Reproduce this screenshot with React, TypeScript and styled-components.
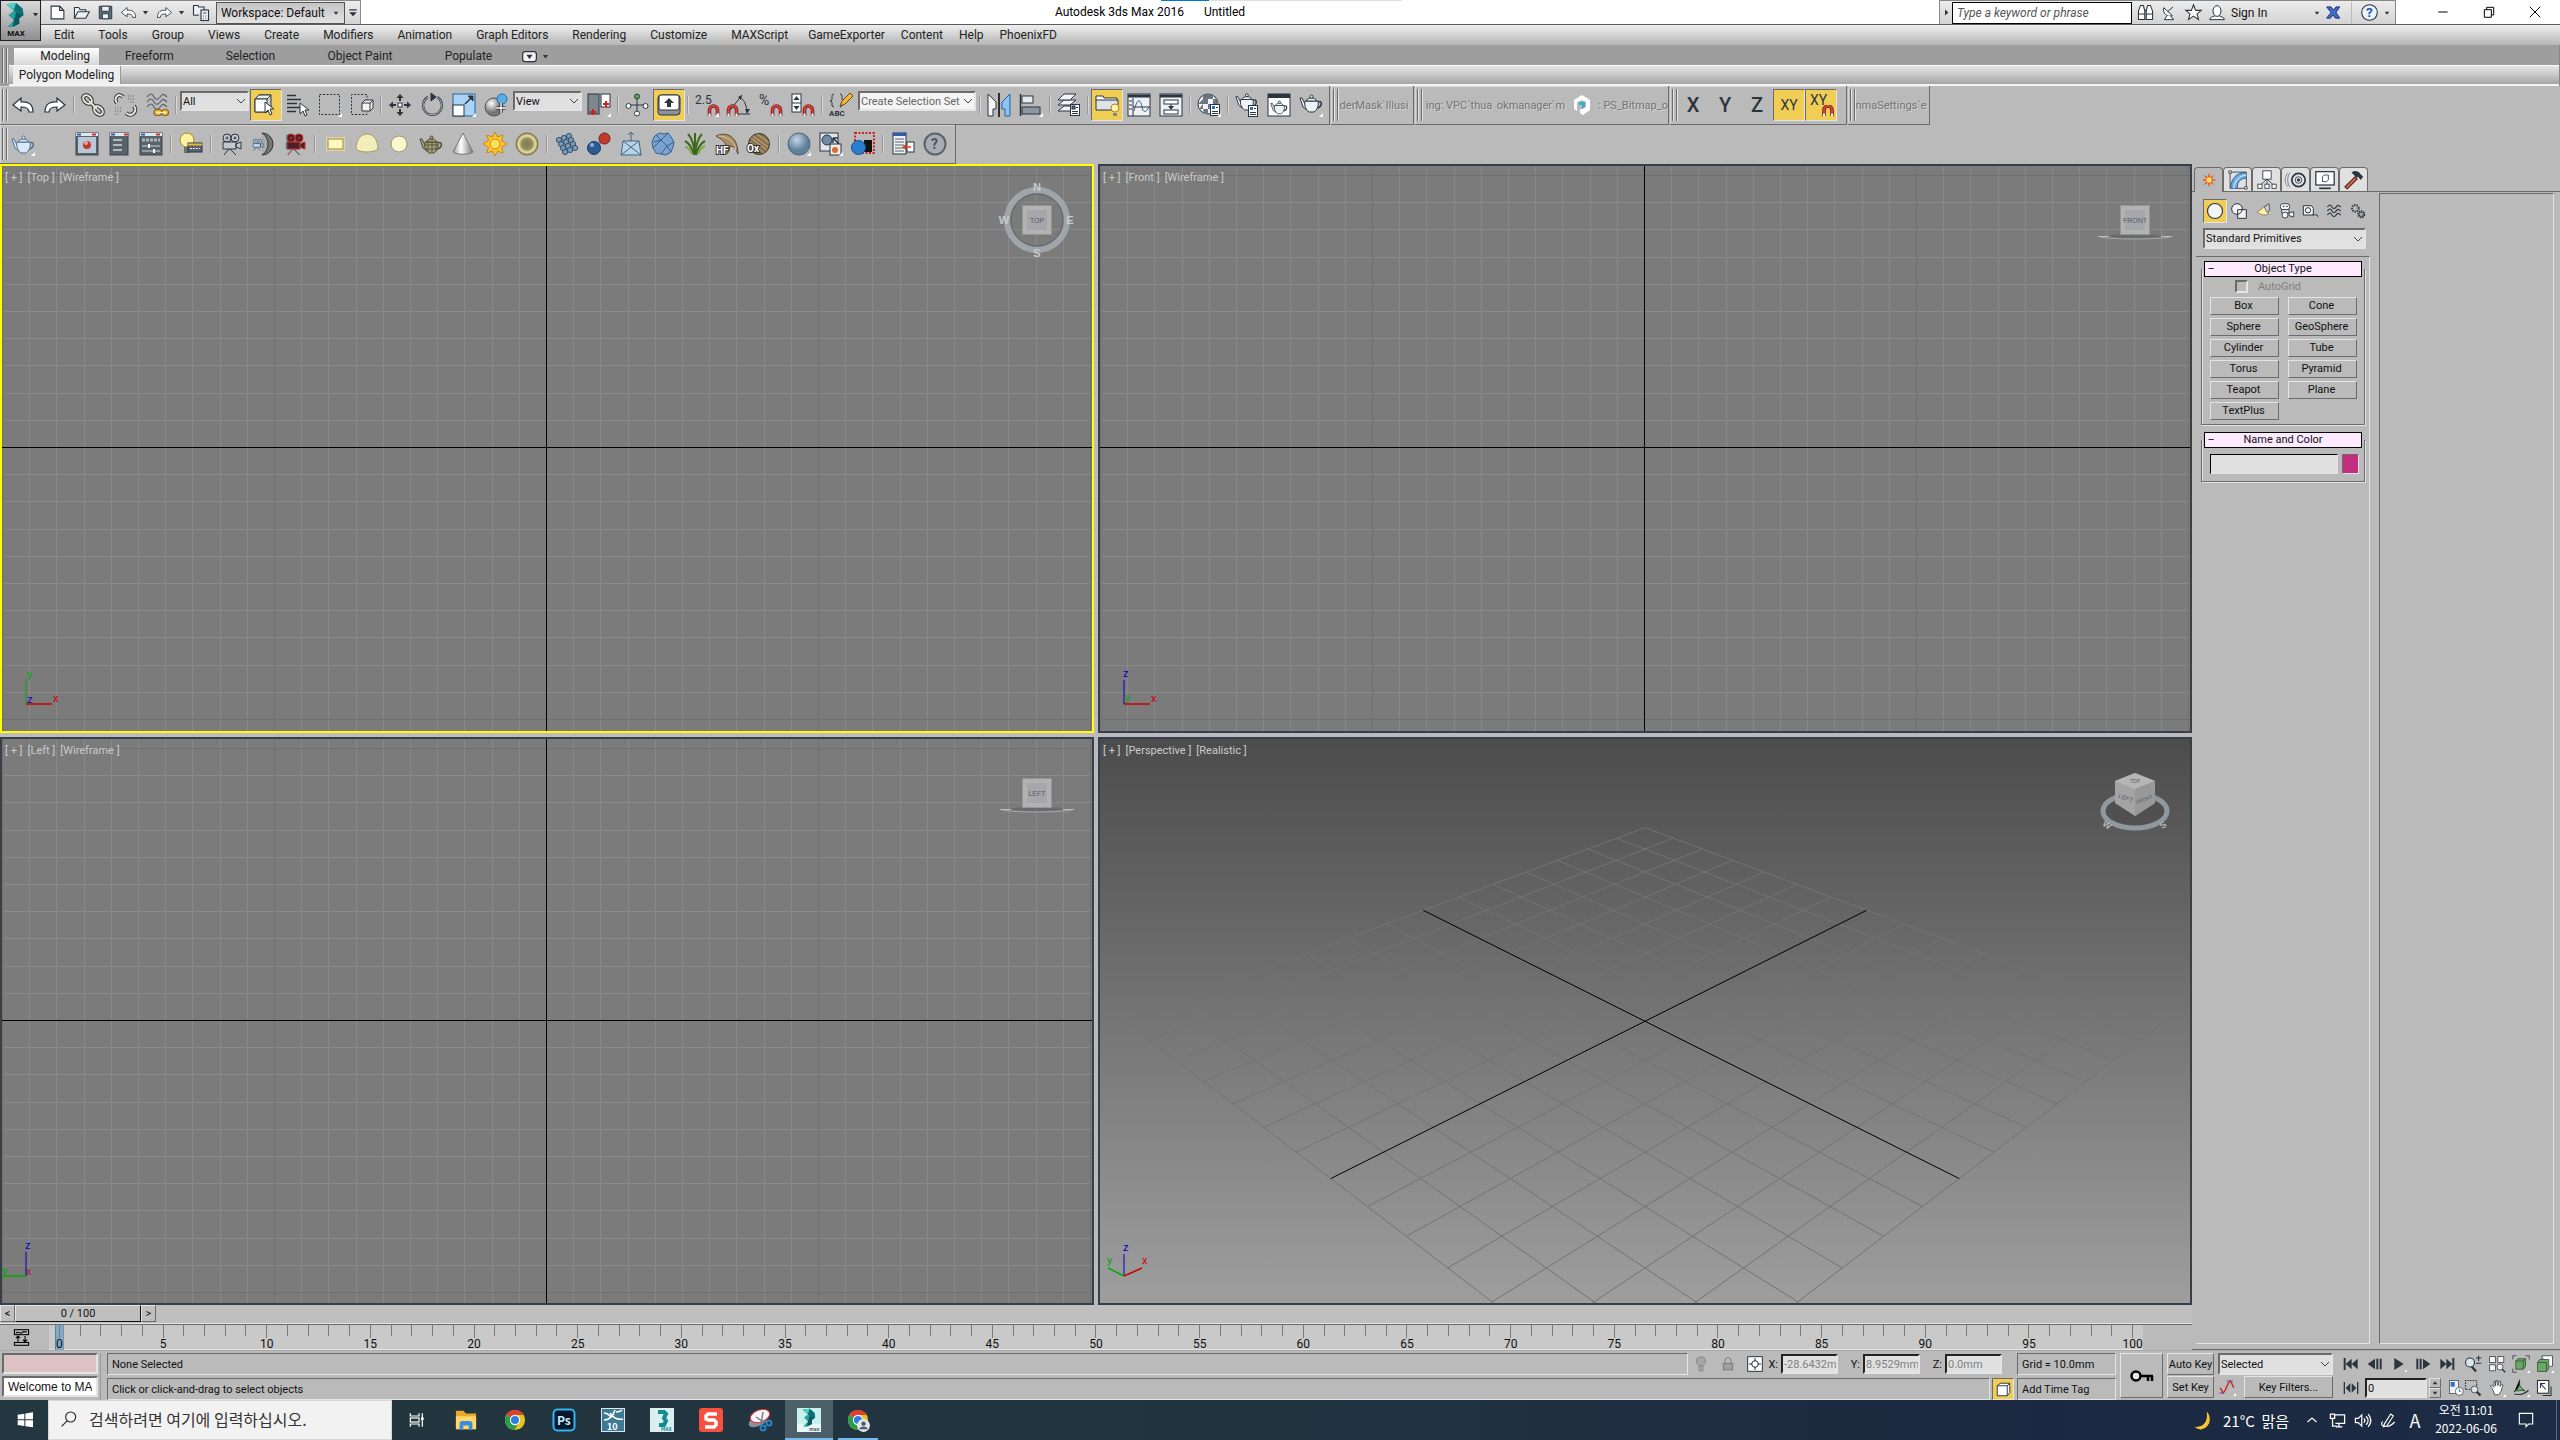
import React from "react";
import styled, { createGlobalStyle, css } from "styled-components";

const UI = `Roboto, "Noto Sans", "Noto Sans CJK KR", sans-serif`;
const C = {
  face: "#bababa",
  dark: "#6b6b6b",
  light: "#e4e4e4",
  ink: "#2b3540",
  yellow: "#f0cd55",
  field: "#e0e0e0",
};

const Global = createGlobalStyle`
  * { box-sizing: border-box; }
  body { margin: 0; background: ${C.face}; font-family: ${UI}; font-size: 12px; color: #111; overflow: hidden; }
  button, input, select { font: inherit; color: inherit; margin: 0; padding: 0; border: 0; border-radius: 0; background: none; min-width: 0; }
  svg { display: block; flex: none; }
`;

/* ---------- icons ---------- */
const teapot = (f = "#eef1f5", s = C.ink) => (
  <g fill={f} stroke={s} strokeLinejoin="round">
    <path d="M18 11c6-3 6 6-1 6" fill="none" strokeWidth="1.500" />
    <path d="M6 13L3 7H1l3 9 4 3z" />
    <path d="M6 10h13c1 5-1 9-4 11h-5c-3-2-5-6-4-11z" />
    <path d="M7 10c2-4 9-4 11 0z" />
    <circle cx="12.500" cy="5.500" r="1.500" />
  </g>
);
const magnet = (x: number, y: number) => (
  <g transform={`translate(${x} ${y})`}>
    <path d="M1.500 11V5a4 4 0 0 1 8 0v6" fill="none" stroke="#7b1d1d" strokeWidth="3.600" />
    <path d="M1.500 8V5a4 4 0 0 1 8 0v3" fill="none" stroke="#d8423c" strokeWidth="2" />
    <path d="M1.500 8.500v2.500M9.500 8.500v2.500" stroke="#fff" strokeWidth="2" />
  </g>
);
const win = (body: React.ReactNode, x = 1) => (
  <g>
    <rect x={x} y="1" width={24 - 2 * x} height="22" fill="#59636c" stroke="#3b444c" />
    <path d={`M${x} 2.500h${24 - 2 * x}`} stroke="#dfe6ee" strokeWidth="3" />
    <path d={`M${x + 1} 2.500h4`} stroke="#2d5fae" strokeWidth="2" />
    <path d="M17 2.500h4" stroke="#c43a2c" strokeWidth="2" />
    {body}
  </g>
);
const fly = <path d="M24 20v4h-4z" fill="#fff" stroke="none" />;
const box = (x: number, y: number, f = "#f2f4f6") => (
  <g fill={f} stroke={C.ink}>
    <path d={`M${x} ${y + 3}l3-3h8v8l-3 3h-8z`} />
    <path d={`M${x} ${y + 3}h8v8M${x + 8} ${y + 3}l3-3`} fill="none" />
  </g>
);
const cursor = (x: number, y: number) => (
  <path transform={`translate(${x} ${y})`} d="M0 0v11l3-3 2 5 2-1-2-5h4z" fill="#fff" stroke={C.ink} />
);
const sheet = (x: number, y: number) => (
  <g transform={`translate(${x} ${y})`}>
    <rect x=".5" y=".5" width="9" height="11" fill="#fff" stroke={C.ink} />
    <rect x="2" y="2" width="3" height="3" fill="#2d6fc4" />
    <path d="M6 3.500h2M2 7.500h6M2 9.500h6" stroke={C.ink} />
  </g>
);
const camera = (f: string, s: string) => (
  <g fill={f} stroke={s}>
    <circle cx="8" cy="6" r="4" />
    <circle cx="16" cy="6" r="4" />
    <path d="M4 10h13v7H4zM17 12l5-2v7l-5-2zM10 17l-5 6M11 17l6 6" />
    <circle cx="8" cy="6" r="1" /><circle cx="16" cy="6" r="1" />
  </g>
);
const chrome = (
  <g>
    <circle cx="12" cy="12" r="11" fill="#e8c21f" />
    <path d="M12 12L2.500 6.500A11 11 0 0 1 21.500 6.500H12z" fill="#dc3f33" />
    <path d="M12 12L2.500 6.500A11 11 0 0 0 11.500 23l5-8.500z" fill="#2a9d4b" />
    <circle cx="12" cy="12" r="5.600" fill="#fff" />
    <circle cx="12" cy="12" r="4.400" fill="#2f7de1" />
  </g>
);
const maxMark = (
  <g>
    <path d="M3 2l9-1 6 5 1 6-4 3v5l-6 3H4l6-6-5-5 5-4z" fill="#1fa59b" />
    <path d="M12 1l6 5 1 6-7-2-2-3z" fill="#0f6f74" />
    <path d="M3 2l9-1-2 6z" fill="#4fd0c4" />
    <path d="M12 10l7 2-4 3v5l-6 3 1-6z" fill="#0b5a63" />
  </g>
);
const bars = (y: number) => <path d={`M2 ${y}c3-4 5-4 7 0s5 2 7-1 4-1 6 1`} />;

const icons: Record<string, React.ReactNode> = {
  undo: <path d="M2 12l8-7v4c7-1 12 2 12 10h-4c0-4-3-5-8-5v4z" fill="#fff" stroke={C.ink} strokeWidth="1.200" />,
  redo: <path d="M22 12l-8-7v4C7 8 2 11 2 19h4c0-4 3-5 8-5v4z" fill="#fff" stroke={C.ink} strokeWidth="1.200" />,
  link: (
    <g fill="none">
      <g stroke={C.ink} strokeWidth="4"><ellipse cx="6.500" cy="6.500" rx="5" ry="3.500" transform="rotate(45 6.500 6.500)" /><ellipse cx="17.500" cy="17.500" rx="5" ry="3.500" transform="rotate(45 17.500 17.500)" /><path d="M8 8l8 8" /></g>
      <g stroke="#ece6d3" strokeWidth="2"><ellipse cx="6.500" cy="6.500" rx="5" ry="3.500" transform="rotate(45 6.500 6.500)" /><ellipse cx="17.500" cy="17.500" rx="5" ry="3.500" transform="rotate(45 17.500 17.500)" /><path d="M8 8l8 8" /></g>
    </g>
  ),
  unlink: (
    <g fill="none">
      <path d="M4 10C0 5 6-1 10 4M13 20c6 5 12-2 8-7" stroke={C.ink} strokeWidth="4" />
      <path d="M4 10C0 5 6-1 10 4M13 20c6 5 12-2 8-7" stroke="#ece6d3" strokeWidth="2" />
      <path d="M15 3h7M15 6h7M17 9h5M2 15h7M2 18h7M2 21h5" stroke="#59636c" strokeDasharray="1 1.500" />
    </g>
  ),
  bind: (
    <g fill="none" stroke="#59636c" strokeWidth="1.200">
      {bars(4)}{bars(9)}{bars(14)}
      <g stroke="#8a5a12"><ellipse cx="13" cy="19.500" rx="4" ry="3" fill="#f2c24a" /><ellipse cx="20" cy="19.500" rx="3.500" ry="3" fill="#f2c24a" /><path d="M12 19.500h9" stroke="#fff3c9" /></g>
    </g>
  ),
  select: <g stroke={C.ink} strokeLinejoin="round"><path d="M1 6l4-4h12v12l-4 5H1z" fill="#c9d0d7" /><path d="M1 6l4-4h12l-4 4z" fill="#eef1f4" /><path d="M1 6h12v13H1z" fill="#fff" />{cursor(11, 9)}</g>,
  byname: <g><path d="M1 2.500h9M1 6.500h14M1 10.500h10M1 14.500h13M1 18.500h9" stroke={C.ink} strokeWidth="1.500" />{cursor(14, 10)}</g>,
  rect: <g><rect x="1.500" y="1.500" width="20" height="20" fill="none" stroke={C.ink} strokeDasharray="2 1.500" />{fly}</g>,
  window: <g><path d="M17 8V1.500H1.500v20H17V19" fill="none" stroke={C.ink} strokeDasharray="2 1.500" />{box(12, 7)}</g>,
  move: (
    <g fill={C.ink}>
      <path d="M12 1l3.500 4h-7zM12 23l3.500-4h-7zM1 12l4-3.500v7zM23 12l-4-3.500v7z" />
      <path d="M12 5v3M12 16v3M5 12h3M16 12h3" stroke={C.ink} strokeWidth="2" />
      <rect x="10" y="10" width="4" height="4" fill="#fff" stroke={C.ink} />
    </g>
  ),
  rotate: <g fill="none" stroke={C.ink}><path d="M8 4a9.500 9.500 0 1 0 9 0" strokeWidth="2.200" /><path d="M8 4a9.500 9.500 0 1 0 9 0" stroke="#d5dbe0" strokeWidth=".8" /><path d="M11 0l5 4-5 4z" fill={C.ink} /></g>,
  scale: <g stroke={C.ink}><rect x="1" y="1" width="22" height="22" fill="#a9d2f4" stroke="#1f64a6" /><rect x="1" y="12" width="11" height="11" fill="#fff" /><path d="M13 11l6-6" strokeWidth="1.500" /><path d="M21 3h-5l5 5z" fill={C.ink} />{fly}</g>,
  place: <g><circle cx="10" cy="14" r="9" fill="url(#ball)" stroke="#555" /><circle cx="18" cy="6" r="5" fill="#58aee6" stroke="#2b6fa5" /><path d="M17 10v10M12 15h10" stroke="#222" strokeWidth="3" /><path d="M17 10v10M12 15h10" stroke="#fff" strokeWidth="1.400" /></g>,
  pivot: <g><rect x="1" y="1" width="11" height="20" fill="#7d8790" stroke={C.ink} /><rect x="14" y="1" width="9" height="13" fill="#fff" stroke={C.ink} /><path d="M6 16v6M3 19h6M19 8v6M16 11h6" stroke="#d01f1f" strokeWidth="2" />{fly}</g>,
  manip: <g stroke={C.ink} fill="#fff"><path d="M12 3v16M3 12h18" /><circle cx="12" cy="3.500" r="2.500" fill="#4db04a" /><circle cx="3.500" cy="13" r="2.500" /><circle cx="20.500" cy="13" r="2.500" /><circle cx="12" cy="20.500" r="2.500" /></g>,
  keyboard: <g><rect x="1" y="2" width="22" height="20" rx="3" fill="#8b9299" stroke={C.ink} /><rect x="2" y="2" width="20" height="15" rx="2" fill="#fff" stroke={C.ink} /><path d="M12 5l5 5h-3v4h-4v-4H7z" fill={C.ink} /></g>,
  snap: <g>{magnet(13, 12)}<text x="0" y="11" fontSize="12" fill={C.ink}>2.5</text>{fly}</g>,
  angle: <g><path d="M1 20L15 2M8 21h15" stroke={C.ink} /><path d="M12 4c5 2 7 7 8 14" fill="none" stroke={C.ink} /><path d="M15 2l-4 2 3 3zM20 21l-2-5h5z" fill={C.ink} />{magnet(0, 12)}</g>,
  percent: <g><text x="0" y="12" fontSize="14" fill={C.ink}>%</text>{magnet(12, 12)}</g>,
  spinner: <g><rect x="1" y="1" width="9" height="18" fill="#fff" stroke={C.ink} /><path d="M1 10h9" stroke={C.ink} /><path d="M5.500 3l3 4h-6zM5.500 17l3-4h-6z" fill={C.ink} />{magnet(12, 12)}</g>,
  named: <g><path d="M5 1c-4 0 0 7-4 7 4 0 0 6 4 6M11 1c4 0 0 7 4 7-4 0 0 6-4 6" fill="none" stroke={C.ink} /><path d="M11 13l2-5 8-8 3 3-8 8z" fill="#f0b93c" stroke="#6b4a10" /><text x="0" y="23" fontSize="8" fontWeight="700" fill={C.ink}>ABC</text></g>,
  mirror: <g stroke={C.ink}><path d="M1 1l8 8v7H6v7H1z" fill="#f2f4f6" /><path d="M23 1l-8 8v7h3v7h5z" fill="#8cc4ee" stroke="#1f64a6" /><path d="M12 0v24" strokeWidth="1.500" stroke="#000" /></g>,
  align: <g stroke={C.ink}><path d="M1.500 1v22" strokeWidth="1.500" /><rect x="3" y="3" width="11" height="7" fill="#e6eaee" /><rect x="3" y="14" width="18" height="7" fill="#8d979f" />{fly}</g>,
  layers: <g stroke={C.ink} fill="#f2f4f6"><path d="M1 18l6-5h12l-6 5z" /><path d="M1 12l6-5h12l-6 5z" /><path d="M1 7l6-6h12l-6 6z" />{sheet(13, 11)}</g>,
  ribbon: <g><path d="M1 3h7l1 2h13v3H1z" fill="#fff" stroke={C.ink} /><path d="M1 7h22v10H1z" fill="#dfe3e8" stroke={C.ink} /><circle cx="20" cy="15" r="4" fill="#fff4ae" stroke="#a68d1f" /><path d="M18 20h4v3h-4z" fill="#888" /></g>,
  curve: <g><rect x="1" y="1" width="22" height="22" fill="#eef1f4" stroke={C.ink} /><path d="M1 3h22" stroke={C.ink} strokeWidth="3" /><path d="M6 5v18M2 8h3M2 12h3M2 16h3M6 14h17" stroke={C.ink} /><path d="M7 18c4-16 7-10 8-4s4 6 7 0" fill="none" stroke="#3c5e7d" /></g>,
  schematic: <g><rect x="1" y="1" width="22" height="22" fill="#eef1f4" stroke={C.ink} /><path d="M1 3h22" stroke={C.ink} strokeWidth="3" /><rect x="5" y="7" width="14" height="4" fill="#fff" stroke={C.ink} /><rect x="5" y="17" width="14" height="4" fill="#fff" stroke={C.ink} /><path d="M12 11v3" stroke={C.ink} /><path d="M9 13h6l-3 4z" fill={C.ink} /></g>,
  material: <g><circle cx="11" cy="11" r="10" fill="#f2f4f6" stroke={C.ink} /><path d="M11 1v5H6V2M6 6v5H1M6 6h5v5H6zM11 6h5V2l-5-1zM16 6h4l1 5h-5zM11 11h5v5h-5zM6 11v5H2M6 16h5v5H7z" fill="#6c7781" />{sheet(13, 11)}{fly}</g>,
  rsetup: <g><g transform="translate(0 -3) scale(.95)">{teapot()}</g>{sheet(13, 12)}</g>,
  rframe: <g><rect x="1" y="1" width="22" height="22" fill="#fff" stroke={C.ink} /><path d="M1 3h22" stroke={C.ink} strokeWidth="4" /><g transform="translate(3 5) scale(.75)">{teapot()}</g></g>,
  render: <g><g transform="translate(0 -2)">{teapot()}</g>{fly}</g>,
  steapot: <g>{teapot("#d9e8f6", "#4f6f8f")}{fly}</g>,
  cube6: <g><path d="M12 2l8 5v10l-7 5-3-2v-4h2l4-2V9l-4-2-5 2v9l-3-2V7z" fill="#fff" /><path d="M9 9h6v5l-3 2v-4H9z" fill="#2fb5d0" /></g>,
  rwin: win(<g><rect x="3" y="5" width="18" height="16" fill="#b9c8d8" /><circle cx="12" cy="13" r="4" fill="#c4392b" /><circle cx="11" cy="11" r="2" fill="#f5a196" /></g>),
  list1: win(<path d="M6 8h9M6 13h9M6 18h9" stroke="#cfd6dc" strokeWidth="1.500" />, 3),
  list2: win(<g><path d="M3 8h18" stroke="#aeb6bd" strokeWidth="3" strokeDasharray="3 1" /><path d="M3 14h18M3 19h18" stroke="#cfd6dc" /><path d="M10 12v4M15 17v4" stroke="#fff" strokeWidth="2" /></g>),
  bulb: <g><circle cx="8" cy="8" r="7" fill="#fff2a0" stroke="#a08a2a" /><path d="M5 15h6v6H5z" fill="#6e6e6e" /><rect x="9" y="11" width="14" height="9" fill="#5a646d" stroke={C.ink} /><path d="M9 12.500h14" stroke="#e9b93a" strokeWidth="2" /><path d="M11 16.500h10" stroke="#e8ecf0" strokeDasharray="2 1" /></g>,
  cam1: camera("#c3c8cc", C.ink),
  cam2: <g><path d="M11 1a11 11 0 0 1 0 22c4-7 4-15 0-22z" fill="#777" stroke="#333" /><path d="M11 1c8 5 8 17 0 22" fill="#aaa" stroke="#333" /><g transform="translate(0 6) scale(.55)">{camera("#b9d3ea", C.ink)}</g></g>,
  cam3: <g><g transform="translate(-1 0)">{camera("none", "#1fb7c9")}</g>{camera("#4a2228", "#cc2a2a")}</g>,
  larea: <g><rect x="3" y="5" width="19" height="14" fill="#ffef9d" opacity=".5" /><rect x="5" y="7" width="15" height="10" fill="#fff6bf" stroke="#9a8b3a" /></g>,
  ldome: <path d="M1 17c0-20 22-20 22 0-4 4-18 4-22 0z" fill="#f3edbb" stroke="#a39b62" />,
  lsphere: <g><circle cx="12" cy="12" r="8" fill="#faf6cd" stroke="#a39b62" /></g>,
  lpot: <g>{teapot("#a8a27a", "#4d4a35")}<path d="M9 9v11M13 9v11M17 10v9M6 13h13M6 17h12" stroke="#4d4a35" strokeWidth=".8" /></g>,
  cone: <path d="M12 1l10 19c-4 3-16 3-20 0z" fill="url(#cone)" stroke="#777" />,
  sun: <g stroke="#c88912" fill="#ffc62b"><path d="M12 0l2.500 5L20 3l-1.500 5.500L24 12l-5.500 3L20 21l-5.500-2L12 24l-2.500-5L4 21l1.500-6L0 12l5.500-3.500L4 3l5.500 2z" /><circle cx="12" cy="12" r="5" fill="#ffe25b" /></g>,
  glow: <circle cx="12" cy="12" r="11" fill="url(#halo)" stroke="#75703f" />,
  mesh: <g fill="#7d9cba" stroke="#35506b">{[0, 1, 2, 3].map((r) => [0, 1, 2].map((c) => <circle key={`${r}${c}`} cx={4 + c * 5 + r * 2} cy={8 - c * 2 + r * 4} r="2.600" />))}</g>,
  atoms: <g><path d="M8 16l9-10" stroke="#889" strokeWidth="3" /><circle cx="7" cy="16" r="6.500" fill="#2f5a96" stroke="#1c3a66" /><circle cx="17.500" cy="6.500" r="5.500" fill="#c03a2e" stroke="#7b1d1d" /><circle cx="5" cy="13" r="2" fill="#8db2e2" /></g>,
  cage: <g fill="#b7d3e6" stroke="#41657f"><path d="M4 9h16l2 14H2z" /><path d="M4 9l18 14M20 9L2 23M12 0v9M9 3l3-3 3 3" fill="none" /></g>,
  rock: <g fill="#7aa3d0" stroke="#375f8d"><path d="M5 3l4-2 4 1 4-1 3 4 3 5-1 5-2 5-5 3-5-1-5-1-3-5-1-6 2-5z" /><path d="M5 3l5 5 7-7M10 8l-8 8M10 8l6 6 7-4M16 14l-6 8M16 14l4 6M3 10l7-2" fill="none" /></g>,
  grass: <g fill="none" strokeWidth="2"><path d="M12 23C11 12 9 6 5 2M12 23C13 12 15 6 19 2M11 23C9 15 6 11 2 9M13 23c2-8 5-12 9-14M12 23V1" stroke="#3d6a1c" /><path d="M9 22C7 17 5 15 2 15M15 22c2-5 4-7 7-8" stroke="#7ca83a" /></g>,
  hair: <g><path d="M1 4c10-5 22 0 22 18-2-6-5-8-8-8-1 5-1 6-3 8C13 13 10 9 1 4z" fill="#a88f64" stroke="#5d4c2c" /><path d="M3 4c8 0 16 4 18 14" fill="none" stroke="#ddcba0" /><text x="1" y="22" fontSize="10" fontWeight="700" fill="#fff" stroke="#333" strokeWidth="2" paintOrder="stroke">HF</text></g>,
  ox: <g><circle cx="12" cy="12" r="10.500" fill="#8b7352" stroke="#41341e" /><path d="M4 6l16 12M6 4l15 11M3 10l14 11M10 2l12 9" stroke="#c7b089" /><text x="0" y="20" fontSize="10" fontWeight="700" fill="#fff" stroke="#333" strokeWidth="2" paintOrder="stroke">Ox</text></g>,
  sphere: <g><circle cx="12" cy="12" r="11" fill="url(#blue)" stroke="#4c6276" />{fly}</g>,
  swap: <g><rect x="1" y="1" width="18" height="18" fill="#dfe5ea" stroke={C.ink} /><circle cx="8" cy="8" r="5" fill="#6e8ca8" stroke={C.ink} /><path d="M14 6h5M14 6v5M14 6l6 6" stroke={C.ink} strokeWidth="1.500" /><rect x="11" y="12" width="11" height="11" fill="#eee" stroke={C.ink} /><circle cx="16" cy="18" r="3" fill="#e06a2b" />{fly}</g>,
  region: <g><rect x="4" y="1" width="19" height="20" fill="none" stroke="#c22" strokeWidth="2" strokeDasharray="2 1.500" /><rect x="13" y="8" width="8" height="12" fill="#111" /><circle cx="7.500" cy="15.500" r="7" fill="#2c7fd0" stroke="#174f88" /></g>,
  script: <g><rect x="2" y="1" width="13" height="21" fill="#eef1f4" stroke={C.ink} /><path d="M2 2.500h13" stroke="#2d5fae" strokeWidth="3" /><path d="M4 7h9M4 10h9M4 13h9M4 16h9M4 19h9" stroke="#59636c" /><rect x="16" y="10" width="7" height="10" fill="#fff" stroke={C.ink} /><path d="M20 15h-6" stroke="#d0411f" strokeWidth="1.500" /><path d="M11 15l4-3v6z" fill="#d0411f" /></g>,
  help: <g><circle cx="12" cy="12" r="10.500" fill="#a7adb3" stroke="#59636c" strokeWidth="2" /><text x="8" y="17" fontSize="14" fontWeight="700" fill="#4d565e">?</text></g>,
  newf: <path d="M3 3h12l6 6v12H3zM15 3v6h6" fill="#fff" stroke={C.ink} strokeWidth="1.500" />,
  open: <path d="M2 20V5h6l2 3h8v3M2 20l5-9h16l-5 9z" fill="#eef1f4" stroke={C.ink} strokeWidth="1.500" />,
  save: <g stroke={C.ink} strokeWidth="1.500"><path d="M2 2h20v20H2z" fill="#5b6c80" /><path d="M6 2h12v8H6zM7 14h10v8H7z" fill="#eef1f4" /></g>,
  proj: <g stroke={C.ink} strokeWidth="1.500" fill="#eef1f4"><path d="M2 15V2h6l1 2h7v4M2 15h7" /><rect x="12" y="8" width="10" height="14" /><path d="M15 12h4M15 16h1M18 16h1M15 19h1M18 19h1" /></g>,
  binoc: <g fill="#fff" stroke={C.ink} strokeWidth="1.500"><path d="M2 10l3-8h4l2 8v12H2zM22 10l-3-8h-4l-2 8v12h9z" /><path d="M2 14h9M13 14h9M11 9h2" /></g>,
  dish: <g fill="#fff" stroke={C.ink} strokeWidth="1.500"><path d="M4 4c-2 8 5 15 13 12z" /><path d="M10 10l8-7M9 16l-4 6h14l-5-6" /></g>,
  star: <path d="M12 1l3 8h8l-6 5 2 8-7-5-7 5 2-8-6-5h8z" fill="#fff" stroke={C.ink} strokeWidth="1.500" />,
  person: <g fill="#fff" stroke={C.ink} strokeWidth="1.500"><path d="M1 22c0-4 5-4 8-6h6c3 2 8 2 8 6z" /><ellipse cx="12" cy="9" rx="6" ry="8" /></g>,
  exch: <path d="M1 3h7l4 5 4-5h6l-6 9 6 9h-7l-4-5-4 5H1l7-9z" fill="#3e6dc2" stroke="#1d2f7a" strokeWidth="1.500" />,
  qhelp: <g><circle cx="12" cy="12" r="11" fill="#eef3fa" stroke={C.ink} strokeWidth="1.500" /><text x="7" y="19" fontSize="19" fontWeight="700" fill="#1e56c0">?</text></g>,
  min: <path d="M4 12h16" stroke="#000" strokeWidth="1.700" />,
  restore: <path d="M4 8h12v13H4zM8 8V4h12v13h-4" fill="none" stroke="#000" strokeWidth="1.700" />,
  close: <path d="M3 3l18 18M21 3L3 21" stroke="#000" strokeWidth="1.700" />,
  tcreate: <g><path d="M12 1l2 7 6-4-4 6 7 2-7 2 4 6-6-4-2 7-2-7-6 4 4-6-7-2 7-2-4-6 6 4z" fill="#e4572a" /><circle cx="12" cy="12" r="4" fill="#ffe34d" /></g>,
  tmodify: <g><path d="M3 22C4 10 10 3 22 3v7c-7 0-11 4-11 12z" fill="#6caee2" stroke="#1f4f80" /><path d="M7 22C8 13 13 7 22 6" stroke="#fff" fill="none" /><path d="M2.500 4v18M4 2.500h18M22 10v10M11 22h9" stroke={C.ink} fill="none" /><path d="M1 1h3v3H1zM20 20h3v3h-3z" fill="#fff" stroke={C.ink} /></g>,
  thier: <g fill="#fff" stroke={C.ink}><rect x="7" y="1" width="10" height="10" /><path d="M12 11l-8 7M12 11v7M12 11l8 7" /><rect x="1" y="17" width="5" height="5" /><rect x="9.500" y="17" width="5" height="5" /><rect x="18" y="17" width="5" height="5" /></g>,
  tmotion: <g fill="none" stroke={C.ink}><path d="M2 4c-4 5-4 11 0 16M5 3c-4 5-4 13 0 18" stroke="#778" /><circle cx="15" cy="12" r="8" strokeWidth="2" fill="#e3e6e9" /><circle cx="15" cy="12" r="4" /><circle cx="15" cy="12" r="1.500" fill={C.ink} /></g>,
  tdisplay: <g stroke={C.ink} fill="#fff"><rect x="1" y="2" width="22" height="16" strokeWidth="1.500" /><path d="M5 22h14" strokeWidth="2" /><path d="M9 8l2-2h5v6l-2 2H9z" /></g>,
  tutil: <g><path d="M2 22L15 9" stroke="#5b2017" strokeWidth="5" /><path d="M3 21L14 10" stroke="#c86b55" strokeWidth="2.500" /><path d="M9 3c4-3 8-2 11 2l3 3-3 4-3-4-2 1-4-4z" fill="#2b3540" /></g>,
  geom: <circle cx="12" cy="12" r="10" fill="#f3f4f6" stroke={C.ink} strokeWidth="1.500" />,
  shapes: <g fill="#f3f4f6" stroke={C.ink} strokeWidth="1.500"><circle cx="9" cy="9" r="8" /><path d="M10 10h13v13H10z" /><path d="M17 9a8 8 0 0 1-8 8" fill="none" /></g>,
  lights: <g><path d="M3 13c4-1 10-6 13-10l4 14c-6 2-12 1-17-4z" fill="#fff0a8" stroke="#6b6030" /><path d="M14 6l7-5 1 10-4 3z" fill="#c5cbd0" stroke={C.ink} /></g>,
  cameras: <g fill="#f3f4f6" stroke={C.ink} strokeWidth="1.300"><rect x="2" y="1" width="14" height="9" rx="4" /><path d="M4 10h11v5H4zM15 15l7-2v8l-7-2z" /><circle cx="9" cy="18" r="4.500" /><path d="M6 5h2M11 5h2" strokeWidth="2" /></g>,
  helpers: <g fill="#f3f4f6" stroke={C.ink} strokeWidth="1.500"><path d="M2 4h12l3 4v10H2z" /><circle cx="9" cy="11" r="4" /><path d="M15 18h8v3" /></g>,
  warps: <g fill="none" stroke={C.ink} strokeWidth="1.600">{bars(6)}{bars(12)}{bars(18)}</g>,
  systems: <g fill="none" stroke={C.ink}><circle cx="8" cy="8" r="5" strokeWidth="3" strokeDasharray="2 1.500" /><circle cx="17" cy="17" r="4" strokeWidth="4" strokeDasharray="2 1" /></g>,
  mini: <g fill="none" stroke="#000" strokeWidth="1.500"><rect x="2" y="1" width="20" height="7" /><path d="M4 6c4-4 6 2 9-1s4 0 7-1M7 18v-7M4 13l3-3 3 3M17 10v7M14 15l3 3 3-3" /><rect x="2" y="19" width="20" height="4" /></g>,
  sbulb: <g fill="#a5a5a5" stroke="#7b7b7b"><circle cx="12" cy="8" r="7" /><path d="M9 15h6v7H9z" /></g>,
  lock: <g fill="#a0a0a0" stroke="#777" strokeWidth="1.500"><path d="M7 11V6a5 5 0 0 1 10 0v5" fill="none" /><rect x="4" y="11" width="16" height="11" /></g>,
  absm: <g fill="#fff" stroke={C.ink} strokeWidth="1.500"><rect x="1" y="1" width="22" height="22" /><circle cx="12" cy="12" r="5" /><path d="M12 3v5M12 16v5M3 12h5M16 12h5" /></g>,
  iso: <g fill="#fff" stroke={C.ink} strokeWidth="1.500"><path d="M2 6l5-4h15v15l-4 5H2z" /><path d="M2 6h16v16M18 6l4-4" fill="none" /></g>,
  key: <g fill="#e9e9e9" stroke="#000" strokeWidth="2.500"><path d="M11 12h12M18 12v5M22 12v5" /><circle cx="6" cy="12" r="4.500" /></g>,
  tangent: <g fill="none"><path d="M2 20h6M12 4h8" stroke="#3355cc" strokeWidth="1.500" /><path d="M3 13l4 7c3-2 6-14 9-16 2 2 3 4 5 9" stroke="#c22" strokeWidth="1.800" />{fly}</g>,
  first: <g fill={C.ink}><path d="M1 3h3v18H1zM13 4v16l-9-8zM22 4v16l-9-8z" /></g>,
  prev: <g fill={C.ink}><path d="M12 4v16L1 12zM14 4h3v16h-3zM19 4h3v16h-3z" /></g>,
  play: <g><path d="M5 3l14 9-14 9z" fill={C.ink} />{fly}</g>,
  next: <g fill={C.ink}><path d="M12 4v16l11-8zM2 4h3v16H2zM7 4h3v16H7z" /></g>,
  last: <g fill={C.ink}><path d="M20 3h3v18h-3zM11 4v16l9-8zM2 4v16l9-8z" /></g>,
  kmode: <g fill={C.ink}><path d="M1 3h2v18H1zM21 3h2v18h-2zM11 5v14l-7-7zM13 5v14l7-7z" /></g>,
  zoom: <g><path d="M10 15l6 7" stroke={C.ink} strokeWidth="3" /><circle cx="8" cy="10" r="6" fill="#dbe3ea" stroke={C.ink} strokeWidth="1.500" /><path d="M16 4h7M19.500 1v7M16 11h7" stroke={C.ink} strokeWidth="1.500" /></g>,
  zoomall: <g fill="#f3f4f6" stroke={C.ink}><path d="M2 2h8v8H2zM13 2h8v8h-8zM2 13h8v8H2z" /><circle cx="16" cy="16" r="4" /><path d="M19 19l4 4" strokeWidth="2" /></g>,
  extents: <g><path d="M1 6V1h5M18 1h5v5M1 18v5h5" fill="none" stroke={C.ink} /><path d="M5 8l3-3h10v10l-3 4H5z" fill="#6fa56a" stroke="#22502a" /><path d="M5 8h10v11M15 8l3-3" fill="none" stroke="#22502a" />{fly}</g>,
  extall: <g><path d="M8 1h14v14h-4M8 1v5" fill="#fff" stroke={C.ink} /><path d="M2 10l3-4h12v12l-3 4H2z" fill="#6fa56a" stroke="#22502a" /><path d="M2 10h12v12" fill="none" stroke="#22502a" />{fly}</g>,
  timecfg: <g><rect x="2" y="1" width="14" height="19" fill="#eef1f4" stroke={C.ink} /><rect x="4" y="3" width="6" height="7" fill="#2d6fc4" /><circle cx="17" cy="17" r="6" fill="#fff" stroke={C.ink} /><path d="M17 13v4h3" stroke={C.ink} fill="none" /></g>,
  zregion: <g><path d="M12 14H2V2h15v7" fill="none" stroke={C.ink} strokeDasharray="2 1.500" strokeWidth="1.500" /><circle cx="14" cy="14" r="4.500" fill="#dbe3ea" stroke={C.ink} /><path d="M17 17l5 5" stroke={C.ink} strokeWidth="3" /></g>,
  hand: <g><path d="M6 13L3 9l2-1 3 3V3h2v6l1-7h2v7l2-6h2l-1 7 2-3 2 1-3 9-3 4H9z" fill="#fff" stroke={C.ink} />{fly}</g>,
  orbit: <g><path d="M10 1v10l-7 6M10 11l7 5" stroke={C.ink} strokeWidth="1.500" /><path d="M10 8l5 7-9 1z" fill="#6fb56a" stroke="#22502a" /><path d="M3 20c8 2 14 0 19-5" fill="none" stroke={C.ink} strokeWidth="1.500" />{fly}</g>,
  maxi: <g><rect x="2" y="2" width="15" height="17" fill="#fff" stroke={C.ink} strokeWidth="1.500" /><path d="M13 14L6 6M6 12V6h6M20 10v12H9" stroke={C.ink} strokeWidth="1.500" fill="none" /></g>,
  start: <path d="M1 4l10-1.500V11H1zM12.500 2.200L24 .5V11H12.500zM1 12.500h10V21L1 19.500zM12.500 12.500H24V23l-11.500-1.600z" fill="#fff" />,
  search: <g fill="none" stroke="#222" strokeWidth="1.700"><circle cx="14.500" cy="9" r="7.500" /><path d="M9.500 14.500L1 23" /></g>,
  taskview: <g fill="none" stroke="#fff" strokeWidth="1.800"><path d="M2 2v4h13V2M2 22v-4h13v4" /><rect x="2" y="9" width="13" height="6" /><path d="M20 2v20" /><path d="M18 8h4v4h-4z" fill="#fff" stroke="none" /></g>,
  folder: <g><path d="M1 2h8l3 3h11v17H1z" fill="#e9a92c" /><path d="M1 8h22v14H1z" fill="#ffd868" /><path d="M5 23v-7c0-2 1-3 3-3h8c2 0 3 1 3 3v7h-4v-5H9v5z" fill="#3b8ede" /></g>,
  chrome,
  chrome2: <g>{chrome}<circle cx="18" cy="18" r="7" fill="#e4e8ee" /><circle cx="18" cy="16" r="2.400" fill="#4d5a6d" /><path d="M13.500 22c0-4 9-4 9 0z" fill="#4d5a6d" /></g>,
  ps: <g><rect x="1.500" y="1.500" width="21" height="21" rx="4" fill="#05182b" stroke="#2fb4f5" strokeWidth="2" /><text x="5" y="17" fontSize="12" fontWeight="700" fill="#cdebff">Ps</text></g>,
  app10: <g><rect x=".5" y=".5" width="23" height="23" fill="#3f7a94" stroke="#d9e6ee" /><path d="M3 12C8 12 12 8 14 2M9 5c3 5 7 7 13 6M3 5c4 0 5 2 7 4M15 4c3 0 5-1 6-2" stroke="#fff" fill="none" strokeWidth="1.600" /><text x="6" y="22" fontSize="9" fontWeight="700" fill="#fff">10</text></g>,
  max3: <g><rect width="24" height="24" fill="#dceff0" /><path d="M8 4h6l2 2-2 4 2 3-2 4H9" fill="none" stroke="#128c93" strokeWidth="4" /><text x="11" y="23" fontSize="5" fontWeight="700" fill="#128c93">MAX</text></g>,
  snagit: <g><rect width="24" height="24" rx="3" fill="#f8503f" /><path d="M18 6H9L7 8v3l2 1h6l2 2v3l-2 2H6" fill="none" stroke="#fff" strokeWidth="3.500" /></g>,
  snip: <g><ellipse cx="10" cy="13" rx="10" ry="5" fill="#8a9097" transform="rotate(-25 10 13)" /><ellipse cx="12" cy="8" rx="10" ry="6" fill="#f5f5f5" stroke="#d34" transform="rotate(-20 12 8)" /><path d="M8 9l9 6M15 4l-2 12" stroke="#778" strokeWidth="1.500" /><g fill="none" stroke="#2485c9" strokeWidth="2"><circle cx="15" cy="20" r="2.500" /><circle cx="21" cy="15" r="2.500" /></g></g>,
  maxapp: <g><rect width="24" height="24" fill="#c8f0ec" /><rect y="16" width="24" height="8" fill="#e9f6f6" /><g transform="translate(3 0) scale(.8)">{maxMark}</g><text x="12" y="23" fontSize="5" fontWeight="700" fill="#456">max</text></g>,
  maxMark,
  moon: <path d="M16 1c6 5 6 19-6 22-4 1-7-1-9-3 12 1 17-8 15-19z" fill="#fbc531" />,
  up: <path d="M3 16l9-8 9 8" stroke="#fff" strokeWidth="2.200" fill="none" />,
  net: <path d="M7 4h15v12H9M2 3h6v6H2zM5 9v11h6M14 16v5M10 21h9" fill="none" stroke="#fff" strokeWidth="1.800" />,
  vol: <path d="M2 9v6h4l5 5V4L6 9zM14 9c2 2 2 4 0 6M17 6c4 4 4 8 0 12M20 3c5 6 5 12 0 18" fill="none" stroke="#fff" strokeWidth="1.700" />,
  pen: <path d="M6 19L16 3l4 3-10 15-5 1zM4 14c-3 3-2 8 3 6M10 21c4 2 8-2 12-6" fill="none" stroke="#fff" strokeWidth="1.700" />,
  notif: <path d="M2 2h20v16h-6l-4 4v-4H2z" fill="none" stroke="#fff" strokeWidth="1.700" />,
  chev: <path d="M4 8l8 8 8-8" stroke="#444" strokeWidth="2" fill="none" />,
  drop: <path d="M5 8h14l-7 9z" fill={C.ink} />,
  right: <path d="M8 4l9 8-9 8z" fill={C.ink} />,
  qmore: <path d="M3 3h18v3H3zM3 10h18l-9 10z" fill={C.ink} />,
  pill: <g><rect x="1" y="4" width="22" height="16" rx="4" fill="#f3f3f3" stroke={C.ink} strokeWidth="2" /><path d="M7 9h10l-5 7z" fill={C.ink} /></g>,
};

const Icon = ({ n, s = 24 }: { n: string; s?: number }) => (
  <svg width={s} height={s} viewBox="0 0 24 24" overflow="visible" aria-hidden="true">{icons[n]}</svg>
);
const HiddenSvg = styled.svg`position: absolute;`;
const Defs = () => (
  <HiddenSvg width="0" height="0" aria-hidden="true">
    <defs>
      <radialGradient id="ball" cx=".35" cy=".3"><stop offset="0" stopColor="#fff" /><stop offset="1" stopColor="#777" /></radialGradient>
      <radialGradient id="blue" cx=".4" cy=".3"><stop offset="0" stopColor="#c3d7e7" /><stop offset="1" stopColor="#5f7f9b" /></radialGradient>
      <radialGradient id="halo"><stop offset="0" stopColor="#7f7a50" /><stop offset=".5" stopColor="#958e5c" /><stop offset=".75" stopColor="#e6dea0" /><stop offset="1" stopColor="#8f8855" /></radialGradient>
      <linearGradient id="cone"><stop offset="0" stopColor="#999" /><stop offset=".4" stopColor="#fff" /><stop offset="1" stopColor="#777" /></linearGradient>
    </defs>
  </HiddenSvg>
);

/* ---------- shared parts ---------- */
const sunken = css`border: 1px solid; border-color: ${C.dark} ${C.light} ${C.light} ${C.dark};`;
const raised = css`border: 1px solid; border-color: ${C.light} ${C.dark} ${C.dark} ${C.light};`;

const Page = styled.div`display: flex; flex-direction: column; height: 100vh; background: ${C.face};`;
const Flat = styled.button<{ $w?: number }>`
  display: flex; align-items: center; justify-content: center; gap: 4px;
  width: ${(p) => (p.$w ? `${p.$w}px` : "auto")}; white-space: nowrap;
`;
const ComboBox = styled.span<{ $w?: number; $h: number; $bg?: string; $ink?: string }>`
  display: grid; grid-template-columns: 1fr 14px; align-items: center; flex: none;
  width: ${(p) => (p.$w ? `${p.$w}px` : "auto")}; height: ${(p) => p.$h}px;
  background: ${(p) => p.$bg || C.field}; color: ${(p) => p.$ink || "#111"}; font-size: 11px;
  border: 2px solid; border-color: ${C.dark} ${C.light} ${C.light} ${C.dark};
  select { grid-area: 1 / 1 / 2 / 3; appearance: none; width: 100%; height: 100%; padding: 0 14px 0 1px; outline: 0; }
  svg { grid-area: 1 / 2; pointer-events: none; justify-self: end; }
`;
const Combo = ({ label, value, w, h, bg, ink }: { label: string; value: string; w?: number; h: number; bg?: string; ink?: string }) => (
  <ComboBox $w={w} $h={h} $bg={bg} $ink={ink}>
    <select aria-label={label}><option>{value}</option></select>
    <Icon n="chev" s={12} />
  </ComboBox>
);

/* ---------- header ---------- */
const Header = styled.header`display: flex; height: 45px; flex: none;`;
const AppButton = styled.button`
  width: 41px; height: 41px; flex: none; display: grid; grid-template-columns: 30px 9px; align-items: center; justify-items: center;
  border: 1px solid #222; background: linear-gradient(#d9d9d9, #8f8f8f); font-size: 8px; font-weight: 700; color: #111;
  span { line-height: 10px; }
`;
const HeaderRows = styled.div`flex: 1; display: flex; flex-direction: column; min-width: 0;`;
const TitleBar = styled.div`
  display: flex; height: 25px; background: #fff; border-bottom: 1px solid #5c5c5c; align-items: stretch;
`;
const Quick = styled.div`
  display: flex; align-items: center; width: 320px; padding-left: 5px;
  background: linear-gradient(#ececec, #d3d3d3); border-right: 1px solid #888; border-top: 1px solid #888;
`;
const Workspace = styled.button`
  display: flex; align-items: center; justify-content: space-between; width: 130px; height: 22px; margin-left: 3px; padding: 0 4px;
  border: 1px solid #555; background: linear-gradient(#c4c4c4, #e2e2e2);
`;
const Title = styled.h1`
  flex: 1; display: flex; justify-content: center; gap: 20px; align-items: center; margin: 0; font-size: 12px; font-weight: 400; color: #000;
  background: linear-gradient(#0078d7, #0078d7) 800px 0 / 48px 1px no-repeat, linear-gradient(#dedede, #dedede) 848px 0 / 193px 1px no-repeat;
`;
const Info = styled.div`
  display: flex; align-items: center; width: 457px; background: linear-gradient(#ececec, #d3d3d3);
  border: 1px solid #888; border-bottom: 0;
`;
const Search = styled.input`
  width: 180px; height: 22px; padding: 0 4px; border: 1px solid #000; background: #fff; font-style: italic; margin-right: 1px;
  &::placeholder { color: #555; opacity: 1; }
`;
const SignIn = styled.button`display: flex; align-items: center; gap: 6px; width: 116px; padding-left: 4px; span { flex: 1; text-align: left; }`;
const Help = styled.button`display: flex; align-items: center; gap: 5px; padding-left: 9px; height: 22px; border-left: 1px solid #bbb; margin-left: 6px;`;
const WinButtons = styled.div`display: flex; padding: 0 2px 0 24px; button { width: 46px; }`;
const MenuBar = styled.nav`
  display: flex; flex: 1; align-items: center; padding-left: 1px; background: linear-gradient(#efefef, #b5b5b5);
`;
const MenuItem = styled.button<{ $tight?: boolean }>`padding: 0 ${(p) => (p.$tight ? 8 : 12)}px; white-space: nowrap; color: #222;`;

const Ribbon = styled.section`
  flex: none; display: grid; grid-template-columns: 9px 1fr; grid-template-rows: 20px 21px; background: #9e9e9e; border-right: 1px solid #888;
`;
const Grip = styled.span`
  width: 5px; margin: 3px 0 3px 2px; flex: none; align-self: stretch;
  border: solid ${C.dark}; border-width: 0 1px; box-shadow: inset 1px 0 ${C.light}, 1px 0 ${C.light};
`;
const RibbonGrip = styled(Grip)`grid-row: 1 / 3;`;
const Tabs = styled.div`display: flex; align-items: stretch; padding: 3px 0 0 5px;`;
const Tab = styled.button<{ $on?: boolean; $w: number }>`
  width: ${(p) => p.$w}px; text-align: ${(p) => (p.$on ? "right" : "center")}; color: #222; line-height: 15px;
  ${(p) => p.$on && css`background: linear-gradient(#fff, #d6d6d6); padding-right: 9px;`}
`;
const SubRibbon = styled.div`
  display: flex; align-items: stretch; background: linear-gradient(#e6e6e6, #a6a6a6); border-top: 1px solid #fff; border-bottom: 2px solid #f4f4f4; padding-left: 4px;
`;
const SubTab = styled.button`width: 108px; background: #efefef; color: #222; border-right: 1px solid #999;`;

/* ---------- toolbars ---------- */
const ToolRow = styled.div`display: flex; height: 39px; flex: none; align-items: stretch;`;
const ToolBar = styled.div<{ $w: number }>`
  display: flex; align-items: center; flex: none; width: ${(p) => p.$w}px; margin-right: 1px;
  border-right: 1px solid ${C.dark}; border-bottom: 1px solid ${C.dark}; box-shadow: inset 0 1px #d5d5d5, inset 1px 0 #d5d5d5;
`;
const Tool = styled.button<{ $on?: boolean }>`
  width: 32px; height: 32px; flex: none; display: grid; place-items: center;
  ${(p) => p.$on && css`background: ${C.yellow}; ${sunken}`}
`;
const Sep = styled.span<{ $w: number }>`
  width: ${(p) => p.$w}px; height: 18px; flex: none; display: flex; justify-content: center;
  &::before { content: ""; border-left: 1px solid #999; border-right: 1px solid #d8d8d8; }
`;
const Space = styled.span`width: 32px;`;
const Pad = styled.span`margin: 0 1px; align-self: flex-start; padding-top: 5px;`;
const Script = styled.button<{ $w: number }>`
  width: ${(p) => p.$w}px; flex: none; overflow: hidden; white-space: nowrap; font-size: 11px; color: #747474; display: flex; justify-content: center; text-shadow: 1px 1px #d4d4d4;
`;
const AxisKey = styled(Tool)<{ $big?: boolean; $snap?: boolean }>`
  color: ${C.ink}; font-size: ${(p) => (p.$big ? 20 : 14)}px; font-weight: ${(p) => (p.$big ? 500 : 400)}; position: relative; line-height: 14px;
  ${(p) => p.$snap && css`place-items: start; padding: 3px 0 0 4px;`}
  svg { position: absolute; right: 2px; bottom: 2px; }
`;

const MainTools = () => {
  const T = (n: string, on?: boolean) => <Tool key={n} type="button" aria-label={n} $on={on}><Icon n={n} /></Tool>;
  return (
    <ToolRow>
      <ToolBar $w={1330}>
        <Grip />
        {["undo", "redo"].map((n) => T(n))}<Sep $w={6} />
        {["link", "unlink", "bind"].map((n) => T(n))}<Sep $w={6} />
        <Pad><Combo label="Selection filter" value="All" w={69} h={20} /></Pad>
        {T("select", true)}{["byname", "rect", "window"].map((n) => T(n))}<Sep $w={6} />
        {["move", "rotate", "scale", "place"].map((n) => T(n))}
        <Pad><Combo label="Reference coordinate system" value="View" w={69} h={20} /></Pad>
        {T("pivot")}<Sep $w={6} />{T("manip")}{T("keyboard", true)}<Sep $w={6} />
        {["snap", "angle", "percent", "spinner"].map((n) => T(n))}<Sep $w={6} />{T("named")}
        <Pad><Combo label="Named selection sets" value="Create Selection Set" w={118} h={20} bg="#f4f4f4" ink="#666" /></Pad><Sep $w={6} />
        {["mirror", "align"].map((n) => T(n))}<Sep $w={6} />{T("layers")}<Sep $w={6} />
        {T("ribbon", true)}{["curve", "schematic"].map((n) => T(n))}<Sep $w={6} />{T("material")}<Sep $w={6} />
        {["rsetup", "rframe", "render"].map((n) => T(n))}
      </ToolBar>
      <ToolBar $w={83}><Grip /><Script $w={72} type="button">derMask`Illusi</Script></ToolBar>
      <ToolBar $w={254}>
        <Grip /><Script $w={74} type="button">ing: VPC`thua</Script><Script $w={70} type="button">okmanager`m</Script>
        <Tool type="button" aria-label="Script logo"><Icon n="cube6" /></Tool><Script $w={70} type="button">: PS_Bitmap_o</Script>
      </ToolBar>
      <ToolBar $w={177}>
        <Grip />
        {["X", "Y", "Z"].map((a) => <AxisKey key={a} $big type="button">{a}</AxisKey>)}
        <AxisKey $on type="button">XY</AxisKey>
        <AxisKey $on $snap type="button" aria-label="Snaps use axis constraints">XY<svg width="12" height="13" viewBox="0 0 12 13">{magnet(0.5, 0)}</svg></AxisKey>
      </ToolBar>
      <ToolBar $w={82}><Grip /><Script $w={72} type="button">nmaSettings`e</Script></ToolBar>
    </ToolRow>
  );
};

const secondGroups = [
  ["rwin", "list1", "list2"], ["bulb"], ["cam1", "cam2", "cam3"],
  ["larea", "ldome", "lsphere", "lpot", "cone", "sun", "glow"],
  ["mesh", "atoms", "cage", "rock", "grass", "hair", "ox"], ["sphere", "swap", "region"], ["script", "help"],
];
const SecondTools = () => (
  <ToolRow>
    <ToolBar $w={956}>
      <Grip />
      <Tool type="button" aria-label="Render presets"><Icon n="steapot" /></Tool><Space />
      {secondGroups.map((g, i) => (
        <React.Fragment key={i}>
          {i > 0 && <Sep $w={8} />}
          {g.map((n) => <Tool key={n} type="button" aria-label={n}><Icon n={n} /></Tool>)}
        </React.Fragment>
      ))}
    </ToolBar>
  </ToolRow>
);

/* ---------- viewports ---------- */
const Main = styled.main`display: flex; flex: 1; min-height: 0;`;
const Stage = styled.div`flex: 1; min-width: 0; display: flex; flex-direction: column;`;
const Quad = styled.div`
  flex: 1; min-height: 0; display: grid; grid-template: 1fr 1fr / 1fr 1fr; gap: 4px; background: #bdb9bf;
`;
const View = styled.section<{ $on?: boolean; $persp?: boolean }>`
  position: relative; overflow: hidden; border: 2px solid ${(p) => (p.$on ? "#ffff00" : "#35404b")};
  background: ${(p) => (p.$persp ? "linear-gradient(#4c4c4c, #9e9e9e)" : "#7b7b7b")};
`;
const Canvas = styled.svg`position: absolute; inset: 0; width: 100%; height: 100%;`;
const Labels = styled.div`
  position: absolute; top: 5px; left: 3px; display: flex; gap: 5px; font-size: 11px; color: #cbcbcb; line-height: 14px;
`;
const CubeSvg = styled.svg`position: absolute; right: 7px; top: 6px;`;
const Tripod = styled.svg`position: absolute; left: 0; bottom: 0;`;

const MINOR = 27.2;
const range = (a: number, b: number) => Array.from({ length: b - a + 1 }, (_, i) => a + i);
const OrthoGrid = () => (
  <Canvas aria-hidden="true">
    {[false, true].map((major) => (
      <svg key={String(major)} x="50%" y="50%" overflow="visible" stroke={major ? "#707070" : "#8a8a8a"} shapeRendering="crispEdges">
        {range(-20, 20).filter((i) => i !== 0 && (i % 10 === 0) === major).map((i) => (
          <path key={i} transform="translate(-.5 -.5)" d={`M${Math.round(i * MINOR)} -600V600M-1400 ${Math.round(i * MINOR)}H1400`} />
        ))}
      </svg>
    ))}
    <svg x="50%" y="50%" overflow="visible" stroke="#000" shapeRendering="crispEdges">
      <path transform="translate(-.5 -.5)" d="M-1400 0H1400M0 -600V600" />
    </svg>
  </Canvas>
);
const project = (u: number, v: number) => {
  const w = 1 - 0.02465 * (u + v);
  return `${((37.14 * (u - v)) / w).toFixed(1)} ${((18.59 * (u + v)) / w).toFixed(1)}`;
};
const PerspGrid = () => (
  <Canvas aria-hidden="true">
    <svg x="50%" y="50%" overflow="visible" stroke="#737373" fill="none">
      {range(-7, 7).filter((i) => i !== 0).map((i) => (
        <path key={i} d={`M${project(i, -7)}L${project(i, 7)}M${project(-7, i)}L${project(7, i)}`} />
      ))}
      <path stroke="#000" d={`M${project(0, -7)}L${project(0, 7)}M${project(-7, 0)}L${project(7, 0)}`} />
    </svg>
  </Canvas>
);
const cubeText = { fontSize: 7, fill: "#555c63", textAnchor: "middle" as const };
const Cube = ({ kind }: { kind: string }) => (
  <CubeSvg width="96" height="96" viewBox="-48 -48 96 96" fontFamily="Liberation Sans, sans-serif">
    {kind === "TOP" && (
      <g>
        <circle r="30" fill="none" stroke="#9fa5ab" strokeWidth="6" />
        <circle r="26" fill="none" stroke="#5f666d" />
        <g fontSize="11" fontWeight="700" fill="#c9c9c9" textAnchor="middle">
          <text y="-29">N</text><text y="37">S</text><text x="-33" y="4">W</text><text x="33" y="4">E</text>
        </g>
      </g>
    )}
    {kind !== "TOP" && kind !== "HOME" && (
      <g>
        <ellipse cy="16" rx="26" ry="2" fill="#5a5a5a" opacity=".5" />
        <path d="M-37 16.500h11M26 16.500h11" stroke="#b9bcc0" />
        <path d="M-34 17.500c20 2 48 2 68 0" stroke="#a3a8ad" fill="none" />
      </g>
    )}
    {kind === "HOME" ? (
      <g>
        <ellipse cy="18" rx="32" ry="17" fill="#4a4a4a" opacity=".5" />
        <ellipse cy="18" rx="32" ry="17" fill="none" stroke="#8f979f" strokeWidth="5" />
        <path d="M0 -20L20 -12V10L0 23L-20 10V-12z" fill="#a4a4a4" />
        <path d="M0 -20L20 -12L0 -4L-20 -12z" fill="#b5b5b5" />
        <path d="M0 -4L20 -12V10L0 23z" fill="#989898" />
        <g {...cubeText}><text y="-10" fontSize="5">TOP</text><text x="-10" y="7" fontSize="6" transform="rotate(20 -10 7)">LEFT</text><text x="10" y="8" fontSize="5" transform="rotate(-22 10 8)">FRONT</text></g>
        <g fontSize="9" fontWeight="700" fill="#b9b9b9" textAnchor="middle"><text x="-28" y="35" transform="rotate(35 -28 32)">W</text><text x="28" y="35" transform="rotate(-35 28 32)">S</text></g>
      </g>
    ) : (
      <g>
        <rect x="-14.500" y="-14.500" width="29" height="29" fill="#b2b2b2" stroke="#959595" />
        <rect x="-10" y="-10" width="20" height="20" fill="#a5a7ab" />
        <text y="2.500" {...cubeText}>{kind}</text>
      </g>
    )}
  </CubeSvg>
);
const tripods: Record<string, React.ReactNode> = {
  top: <g><path d="M25 33V9" stroke="#0a0" /><path d="M25 33h26" stroke="#c00" strokeWidth="1.500" /><text x="26" y="7" fill="#0a0">y</text><text x="26" y="32" fill="#00c">z</text><text x="52" y="31" fill="#c00">x</text></g>,
  front: <g><path d="M25 33V9" stroke="#00c" /><path d="M25 33h26" stroke="#c00" strokeWidth="1.500" /><text x="24" y="6" fill="#00c">z</text><text x="26" y="30" fill="#0a0">y</text><text x="52" y="31" fill="#c00">x</text></g>,
  left: <g><path d="M25 33V9" stroke="#00c" /><path d="M0 33h25" stroke="#0a0" strokeWidth="1.500" /><text x="24" y="6" fill="#00c">z</text><text x="25" y="32" fill="#a02040">x</text><text x="1" y="31" fill="#0a0">y</text></g>,
  persp: <g><path d="M25 33V11" stroke="#00c" /><path d="M25 33l18-8" stroke="#c00" strokeWidth="1.500" /><path d="M25 33l-16-8" stroke="#0a0" strokeWidth="1.500" /><text x="24" y="8" fill="#00c">z</text><text x="43" y="21" fill="#c00">x</text><text x="8" y="21" fill="#0a0">y</text></g>,
};
const Viewport = ({ name, shade, cube, tri, on, persp }: { name: string; shade: string; cube: string; tri: string; on?: boolean; persp?: boolean }) => (
  <View $on={on} $persp={persp} aria-label={name}>
    {persp ? <PerspGrid /> : <OrthoGrid />}
    <Labels>
      <button type="button">[ + ]</button><button type="button">[{name} ]</button><button type="button">[{shade} ]</button>
    </Labels>
    <Cube kind={cube} />
    <Tripod width="70" height="60" viewBox="1 0 70 60" overflow="visible" fontSize="11">{tripods[tri]}</Tripod>
  </View>
);

/* ---------- timeline ---------- */
const SliderRow = styled.div`
  display: flex; height: 19px; flex: none; padding-bottom: 1px; background: #bfbfbf; font-size: 11px; border-bottom: 1px solid ${C.light};
  button { width: 15px; ${raised} line-height: 13px; }
`;
const Thumb = styled.output`
  width: 126px; text-align: center; line-height: 16px; border: 1px solid; border-color: ${C.light} #111 #111 ${C.light};
`;
const TrackRow = styled.div`display: flex; height: 26px; flex: none; border-top: 1px solid ${C.dark};`;
const TrackButton = styled.button`width: 49px; display: grid; place-items: center; padding-right: 6px;`;
const Ruler = styled.div`
  flex: 1; margin-right: 49px; display: grid; grid-template-columns: repeat(101, 1fr); background: #c9c9c9; font-size: 12px; border-bottom: 1px solid ${C.light};
`;
const Tick = styled.div<{ $major: boolean; $now: boolean }>`
  display: flex; flex-direction: column; align-items: center; line-height: 12px; color: #111;
  &::before { content: ""; width: 1px; height: ${(p) => (p.$major ? 13 : 11)}px; background: #7b7b7b; }
  ${(p) => p.$now && css`background: linear-gradient(90deg, transparent 6px, #3e5a72 6px, #7fa9c8 7px, #7fa9c8 14px, #3e5a72 14px, transparent 15px);`}
`;

/* ---------- command panel ---------- */
const Panel = styled.aside`width: 368px; flex: none; display: flex; flex-direction: column; font-size: 11px; padding-top: 3px; border-bottom: 1px solid ${C.dark};`;
const PanelTabs = styled.div`display: flex; height: 25px; padding-left: 2px; border-bottom: 1px solid ${C.dark}; flex: none;`;
const PanelTab = styled.button<{ $on?: boolean }>`
  width: 29px; display: grid; place-items: center; border: 1px solid ${C.dark}; border-bottom: 0; border-radius: 4px 4px 0 0;
  background: ${(p) => (p.$on ? C.face : "#e0e0e0")}; height: ${(p) => (p.$on ? 25 : 24)}px;
`;
const PanelBody = styled.div`flex: 1; display: flex; min-height: 0; padding: 1px 6px 5px 4px; gap: 9px;`;
const PanelCol = styled.div`width: 174px; display: flex; flex-direction: column;`;
const PanelBlank = styled.div`flex: 1; ${sunken}`;
const Cats = styled.div`display: flex; padding: 6px 0 5px 7px;`;
const Cat = styled.button<{ $on?: boolean }>`
  width: 24px; height: 24px; display: grid; place-items: center; ${(p) => p.$on && css`background: ${C.yellow}; ${sunken}`}
`;
const SelectSlot = styled.div`padding: 0 4px 7px 7px; display: grid;`;
const Rollouts = styled.div`flex: 1; border-top: 1px solid ${C.dark}; border-right: 1px solid ${C.light}; border-bottom: 1px solid ${C.light}; padding: 4px 4px 0 5px; display: flex; flex-direction: column; gap: 7px;`;
const Roll = styled.section`display: flex; flex-direction: column;`;
const RollHead = styled.button`
  display: grid; grid-template-columns: 12px 1fr 12px; align-items: center; height: 16px; margin: 0 3px; border: 1px solid #000; background: #fdeaff; color: #111; line-height: 14px; z-index: 1;
`;
const RollBody = styled.div`
  margin-top: -8px; padding: 10px 5px 4px 8px; border: 1px solid ${C.dark}; border-top: 0; box-shadow: 1px 1px ${C.light}, inset 1px 0 ${C.light};
`;
const AutoGrid = styled.label`
  display: flex; gap: 10px; align-items: center; height: 14px; padding-left: 25px; color: #808080; margin-bottom: 4px;
  input { appearance: none; width: 13px; height: 13px; ${sunken} border-width: 2px; }
`;
const ObjGrid = styled.div`display: grid; grid-template-columns: 1fr 1fr; gap: 3px 9px; padding-right: 2px;`;
const ObjButton = styled.button`height: 18px; ${raised} line-height: 14px; padding-right: 2px;`;
const NameRow = styled.div`
  display: grid; grid-template-columns: 1fr 17px; gap: 4px; padding: 4px 0 3px;
  input { height: 20px; background: ${C.field}; border: 1px solid #000; border-right-color: ${C.light}; border-bottom-color: ${C.light}; padding: 0 3px; }
  button { height: 20px; background: #c32e80; ${sunken} }
`;

const objects = ["Box", "Cone", "Sphere", "GeoSphere", "Cylinder", "Tube", "Torus", "Pyramid", "Teapot", "Plane", "TextPlus"];
const CommandPanel = () => (
  <Panel>
    <PanelTabs>
      {["tcreate", "tmodify", "thier", "tmotion", "tdisplay", "tutil"].map((n, i) => (
        <PanelTab key={n} $on={i === 0} type="button" aria-label={n}><Icon n={n} s={i ? 20 : 16} /></PanelTab>
      ))}
    </PanelTabs>
    <PanelBody>
      <PanelCol>
        <Cats>
          {["geom", "shapes", "lights", "cameras", "helpers", "warps", "systems"].map((n, i) => (
            <Cat key={n} $on={i === 0} type="button" aria-label={n}><Icon n={n} s={i ? 16 : 18} /></Cat>
          ))}
        </Cats>
        <SelectSlot><Combo label="Object category" value="Standard Primitives" h={21} /></SelectSlot>
        <Rollouts>
          <Roll>
            <RollHead type="button"><span>–</span><span>Object Type</span></RollHead>
            <RollBody>
              <AutoGrid><input type="checkbox" disabled />AutoGrid</AutoGrid>
              <ObjGrid>{objects.map((o) => <ObjButton key={o} type="button">{o}</ObjButton>)}</ObjGrid>
            </RollBody>
          </Roll>
          <Roll>
            <RollHead type="button"><span>–</span><span>Name and Color</span></RollHead>
            <RollBody><NameRow><input aria-label="Object name" /><button type="button" aria-label="Object color" /></NameRow></RollBody>
          </Roll>
        </Rollouts>
      </PanelCol>
      <PanelBlank />
    </PanelBody>
  </Panel>
);

/* ---------- status bar ---------- */
const Status = styled.footer`height: 50px; flex: none; display: flex; font-size: 11px; padding-top: 2px; border-top: 1px solid #a8a8a8;`;
const Listener = styled.div`
  width: 101px; padding: 0 2px; display: grid; grid-template-rows: 21px 21px; gap: 2px; flex: none; border-right: 1px solid #999; margin-right: 6px;
  input { ${sunken} border-width: 2px; width: 96px; padding: 0 4px; background: #fff; font-family: "Liberation Sans", sans-serif; font-size: 12px; line-height: 14px; }
  input:first-child { background: #dcc2c2; }
`;
const Mid = styled.div`flex: 1; min-width: 0; display: flex; flex-direction: column; gap: 3px;`;
const Line = styled.div`display: flex; height: 22px; align-items: stretch;`;
const Msg = styled.div`flex: 1; ${sunken} padding-left: 4px; line-height: 21px; white-space: nowrap;`;
const SIcons = styled.div`display: flex; width: 80px; button { width: 27px; display: grid; place-items: center; }`;
const Coord = styled.label`
  display: flex; align-items: center; justify-content: flex-end; gap: 3px; width: 82px;
  input { width: 57px; height: 20px; background: ${C.field}; color: #808080; border: 2px solid; border-color: #222 ${C.light} ${C.light} #222; padding-left: 1px; }
  &:first-of-type { width: 70px; }
`;
const Cell = styled.button<{ $ml: number }>`width: 99px; margin-left: ${(p) => p.$ml}px; ${sunken} text-align: left; padding-left: 4px;`;
const Iso = styled.button`width: 22px; margin-left: 2px; background: ${C.yellow}; ${sunken} display: grid; place-items: center;`;
const Keys = styled.div`
  display: grid; grid-template: 22px 22px / 43px 47px 22px 89px; gap: 1px 4px; padding-left: 4px; flex: none;
`;
const Raised = styled.button<{ $tall?: boolean }>`${raised} display: grid; place-items: center; white-space: nowrap; ${(p) => p.$tall && css`grid-row: 1 / 3;`}`;
const Wide = styled.div`grid-column: 3 / 5; display: grid;`;
const Play = styled.div`width: 128px; padding-left: 6px; display: grid; grid-template-rows: 22px 22px; gap: 2px; flex: none;`;
const PlayRow = styled.div`display: flex; align-items: center; button { width: 24px; display: grid; place-items: center; }`;
const Frame = styled.input`&& { width: 62px; height: 20px; background: ${C.field}; border: 2px solid; border-color: #222 ${C.light} ${C.light} #222; padding-left: 1px; margin-left: 2px; }`;
const Spin = styled.span`
  display: grid; grid-template-rows: 10px 10px; width: 12px; margin: 0 3px 0 2px;
  && button { width: 12px; ${raised} } button:first-child svg { transform: rotate(180deg); }
`;
const Nav = styled.div`width: 99px; display: grid; grid-template: 22px 22px / repeat(4, 24px); gap: 2px 0; flex: none; button { display: grid; place-items: center; }`;
const IB = ({ n, s = 18 }: { n: string; s?: number }) => <button type="button" aria-label={n}><Icon n={n} s={s} /></button>;

const StatusBar = () => (
  <Status>
    <Listener><input aria-label="Macro recorder" /><input aria-label="MAXScript listener" defaultValue="Welcome to MAXScript." /></Listener>
    <Mid>
      <Line>
        <Msg>None Selected</Msg>
        <SIcons><IB n="sbulb" s={16} /><IB n="lock" s={14} /><IB n="absm" s={16} /></SIcons>
        <Coord>X:<input defaultValue="-28.6432m" /></Coord>
        <Coord>Y:<input defaultValue="8.9529mm" /></Coord>
        <Coord>Z:<input defaultValue="0.0mm" /></Coord>
        <Cell $ml={15} type="button">Grid = 10.0mm</Cell>
      </Line>
      <Line>
        <Msg>Click or click-and-drag to select objects</Msg>
        <Iso type="button" aria-label="Isolate selection"><Icon n="iso" s={15} /></Iso>
        <Cell $ml={3} type="button">Add Time Tag</Cell>
      </Line>
    </Mid>
    <Keys>
      <Raised $tall type="button" aria-label="Set keys"><Icon n="key" /></Raised>
      <Raised type="button">Auto Key</Raised>
      <Wide><Combo label="Key set" value="Selected" h={22} /></Wide>
      <Raised type="button">Set Key</Raised>
      <IB n="tangent" />
      <Raised type="button">Key Filters...</Raised>
    </Keys>
    <Play>
      <PlayRow>{["first", "prev", "play", "next", "last"].map((n) => <IB key={n} n={n} s={16} />)}</PlayRow>
      <PlayRow>
        <IB n="kmode" s={16} /><Frame aria-label="Current frame" defaultValue="0" />
        <Spin><IB n="drop" s={8} /><IB n="drop" s={8} /></Spin><IB n="timecfg" s={16} />
      </PlayRow>
    </Play>
    <Nav>{["zoom", "zoomall", "extents", "extall", "zregion", "hand", "orbit", "maxi"].map((n) => <IB key={n} n={n} s={18} />)}</Nav>
  </Status>
);

/* ---------- taskbar ---------- */
const TaskBar = styled.nav`
  height: 40px; flex: none; display: flex; align-items: stretch; color: #fff; background: linear-gradient(90deg, #233740, #21333f 50%, #1b2841 80%, #1d2c44);
  font-family: "Noto Sans CJK KR", sans-serif;
`;
const TaskSearch = styled.label`
  width: 344px; background: #f2f2f2; display: flex; align-items: center; gap: 12px; padding: 0 0 2px 12px; border: 1px solid #d5d5d5;
  input { flex: 1; font-size: 16px; line-height: 20px; outline: 0; &::placeholder { color: #333; opacity: 1; } }
`;
const TaskApp = styled.button<{ $on?: boolean; $run?: boolean; $w?: number }>`
  width: ${(p) => p.$w || 49}px; display: grid; place-items: center; border-left: 1px solid transparent; padding-bottom: 1px;
  ${(p) => p.$on && css`background: #4d5f68; background-clip: padding-box; box-shadow: inset 0 -2px #76b9ed;`}
  ${(p) => p.$run && css`background: linear-gradient(#76b9ed, #76b9ed) center bottom / 40px 2px no-repeat;`}
`;
const Tray = styled.div`margin-left: auto; display: flex; align-items: center; height: 40px;`;
const Weather = styled.button`display: flex; align-items: center; gap: 10px; width: 106px; height: 40px; font-size: 15px; white-space: nowrap;`;
const TrayBtn = styled.button<{ $w: number }>`width: ${(p) => p.$w}px; height: 40px; display: grid; place-items: center; font-size: 18px;`;
const Clock = styled.button`width: 76px; font-size: 12px; line-height: 18px; text-align: center; padding-bottom: 2px;`;
const Edge = styled.button`width: 4px; height: 40px; border-left: 1px solid #5d6a7c; margin-left: 8px;`;

const taskSizes: Record<string, number> = { taskview: 16, folder: 22, chrome: 22, chrome2: 22 };

export default function App() {
  const menus = ["Edit", "Tools", "Group", "Views", "Create", "Modifiers", "Animation", "Graph Editors", "Rendering", "Customize", "MAXScript"];
  return (
    <Page>
      <Global />
      <Defs />
      <Header>
        <AppButton type="button" aria-label="Application menu">
          <Icon n="maxMark" s={26} /><Icon n="drop" s={9} /><span>MAX</span>
        </AppButton>
        <HeaderRows>
          <TitleBar>
            <Quick>
              <Flat $w={24} type="button" aria-label="New"><Icon n="newf" s={17} /></Flat>
              <Flat $w={24} type="button" aria-label="Open"><Icon n="open" s={17} /></Flat>
              <Flat $w={24} type="button" aria-label="Save"><Icon n="save" s={15} /></Flat>
              <Flat $w={36} type="button" aria-label="Undo"><Icon n="undo" s={17} /><Icon n="drop" s={9} /></Flat>
              <Flat $w={36} type="button" aria-label="Redo"><Icon n="redo" s={17} /><Icon n="drop" s={9} /></Flat>
              <Flat $w={24} type="button" aria-label="Project"><Icon n="proj" s={18} /></Flat>
              <Workspace type="button">Workspace: Default<Icon n="drop" s={8} /></Workspace>
              <Flat $w={15} type="button" aria-label="Customize toolbar"><Icon n="qmore" s={10} /></Flat>
            </Quick>
            <Title><span>Autodesk 3ds Max 2016</span><span>Untitled</span></Title>
            <Info>
              <Flat $w={12} type="button" aria-label="Collapse"><Icon n="right" s={9} /></Flat>
              <Search aria-label="Search" placeholder="Type a keyword or phrase" />
              <Flat $w={24} type="button" aria-label="Find"><Icon n="binoc" s={17} /></Flat>
              <Flat $w={24} type="button" aria-label="Communication center"><Icon n="dish" s={16} /></Flat>
              <Flat $w={24} type="button" aria-label="Favorites"><Icon n="star" s={17} /></Flat>
              <SignIn type="button"><Icon n="person" s={16} /><span>Sign In</span><Icon n="drop" s={8} /></SignIn>
              <Flat $w={24} type="button" aria-label="Exchange"><Icon n="exch" s={15} /></Flat>
              <Help type="button" aria-label="Help"><Icon n="qhelp" s={17} /><Icon n="drop" s={8} /></Help>
            </Info>
            <WinButtons>
              <Flat type="button" aria-label="Minimize"><Icon n="min" s={14} /></Flat>
              <Flat type="button" aria-label="Restore"><Icon n="restore" s={14} /></Flat>
              <Flat type="button" aria-label="Close"><Icon n="close" s={14} /></Flat>
            </WinButtons>
          </TitleBar>
          <MenuBar>
            {menus.map((m) => <MenuItem key={m} type="button">{m}</MenuItem>)}
            {["GameExporter", "Content", "Help", "PhoenixFD"].map((m) => <MenuItem key={m} $tight type="button">{m}</MenuItem>)}
          </MenuBar>
        </HeaderRows>
      </Header>
      <Ribbon>
        <RibbonGrip />
        <Tabs>
          <Tab $on $w={85} type="button">Modeling</Tab>
          <Tab $w={101} type="button">Freeform</Tab>
          <Tab $w={101} type="button">Selection</Tab>
          <Tab $w={118} type="button">Object Paint</Tab>
          <Tab $w={99} type="button">Populate</Tab>
          <Flat $w={36} type="button" aria-label="Ribbon options"><Icon n="pill" s={15} /><Icon n="drop" s={9} /></Flat>
        </Tabs>
        <SubRibbon><SubTab type="button">Polygon Modeling</SubTab></SubRibbon>
      </Ribbon>
      <MainTools />
      <SecondTools />
      <Main>
        <Stage>
          <Quad>
            <Viewport name="Top" shade="Wireframe" cube="TOP" tri="top" on />
            <Viewport name="Front" shade="Wireframe" cube="FRONT" tri="front" />
            <Viewport name="Left" shade="Wireframe" cube="LEFT" tri="left" />
            <Viewport name="Perspective" shade="Realistic" cube="HOME" tri="persp" persp />
          </Quad>
          <SliderRow>
            <button type="button">&lt;</button><Thumb>0 / 100</Thumb><button type="button">&gt;</button>
          </SliderRow>
          <TrackRow>
            <TrackButton type="button" aria-label="Mini curve editor"><Icon n="mini" s={17} /></TrackButton>
            <Ruler>
              {range(0, 100).map((i) => <Tick key={i} $major={i % 5 === 0} $now={i === 0}>{i % 5 === 0 && <span>{i}</span>}</Tick>)}
            </Ruler>
          </TrackRow>
        </Stage>
        <CommandPanel />
      </Main>
      <StatusBar />
      <TaskBar>
        <TaskApp $w={48} type="button" aria-label="Start"><Icon n="start" s={16} /></TaskApp>
        <TaskSearch><Icon n="search" s={16} /><input aria-label="검색" placeholder="검색하려면 여기에 입력하십시오." /></TaskSearch>
        {["taskview", "folder", "chrome", "ps", "app10", "max3", "snagit", "snip", "maxapp", "chrome2"].map((n) => (
          <TaskApp key={n} $on={n === "maxapp"} $run={n === "chrome2"} type="button" aria-label={n}><Icon n={n} s={taskSizes[n] || 24} /></TaskApp>
        ))}
        <Tray>
          <Weather type="button"><Icon n="moon" s={19} /><span>21°C&nbsp; 맑음</span></Weather>
          <TrayBtn $w={24} type="button" aria-label="Hidden icons"><Icon n="up" s={12} /></TrayBtn>
          <TrayBtn $w={26} type="button" aria-label="Network"><Icon n="net" s={17} /></TrayBtn>
          <TrayBtn $w={24} type="button" aria-label="Volume"><Icon n="vol" s={17} /></TrayBtn>
          <TrayBtn $w={28} type="button" aria-label="Pen"><Icon n="pen" s={16} /></TrayBtn>
          <TrayBtn $w={26} type="button">A</TrayBtn>
          <Clock type="button">오전 11:01<br />2022-06-06</Clock>
          <TrayBtn $w={44} type="button" aria-label="Notifications"><Icon n="notif" s={16} /></TrayBtn>
          <Edge type="button" aria-label="Show desktop" />
        </Tray>
      </TaskBar>
    </Page>
  );
}
